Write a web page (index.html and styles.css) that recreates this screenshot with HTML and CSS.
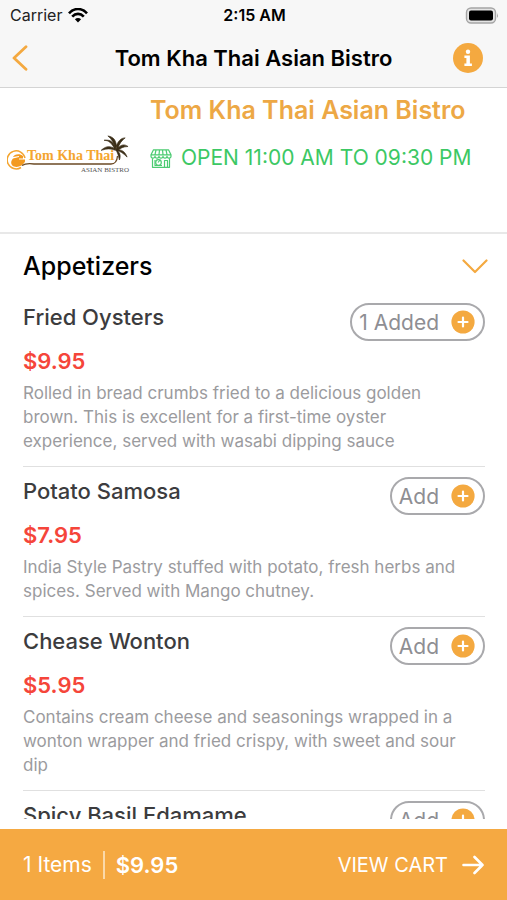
FILE: index.html
```html
<!DOCTYPE html>
<html lang="en">
<head>
<meta charset="utf-8">
<meta name="viewport" content="width=device-width, initial-scale=1">
<title>Tom Kha Thai Asian Bistro</title>
<link rel="stylesheet" href="styles.css">
</head>
<body>
<svg class="sprite" width="0" height="0" aria-hidden="true">
  <symbol id="plus" viewBox="0 0 24 24">
    <circle cx="12" cy="12" r="11.600" fill="#f4a940"/>
    <path d="M12 7.500v9M7.500 12h9" stroke="#fff" stroke-width="2.200" stroke-linecap="round"/>
  </symbol>
</svg>
<div class="app">
  <header class="top">
    <div class="status">
      <span class="carrier">Carrier
        <svg width="20" height="15" viewBox="0 0 20 15" fill="none" stroke="#000" stroke-width="2.6" aria-hidden="true">
          <path d="M1 5.3C6-.4 14-.4 19 5.3M4.2 8.6c3.4-3.7 8.2-3.7 11.6 0"/>
          <path d="M6.9 11.3c1.8-1.8 4.4-1.8 6.2 0L10 14.6z" fill="#000" stroke="none"/>
        </svg>
      </span>
      <span class="clock">2:15 AM</span>
      <svg class="battery" width="34" height="17" viewBox="0 0 34 17" aria-hidden="true">
        <rect x="1.500" y="1" width="29" height="15" rx="4.5" fill="#e4e4e4" stroke="#a5a5a5" stroke-width="1.4"/>
        <rect x="4" y="3.500" width="24" height="10" rx="2"/>
        <path d="M32 6q1.8 2.5 0 5z" fill="#a5a5a5"/>
      </svg>
    </div>
    <nav class="nav">
      <button class="icon-btn" aria-label="Back">
        <svg width="16" height="26" viewBox="0 0 16 26" fill="none" stroke="#f4a940" stroke-width="2.8" stroke-linecap="round" stroke-linejoin="round"><path d="M14 1.8 2 13l12 11.2"/></svg>
      </button>
      <h1>Tom Kha Thai Asian Bistro</h1>
      <button class="icon-btn info" aria-label="Information">
        <svg width="30" height="30" viewBox="0 0 30 30"><circle cx="15" cy="15" r="15" fill="#f4a940"/><circle cx="15" cy="8.7" r="2.2" fill="#fff"/><path d="M11.4 12.6h5.5v7.8h2v2.5h-7.5v-2.5h2v-5.3h-2z" fill="#fff"/></svg>
      </button>
    </nav>
  </header>

  <section class="place">
    <svg class="logo" width="124" height="40" viewBox="0 0 124 40" role="img" aria-label="Tom Kha Thai Asian Bistro logo">
      <path d="M18 23A9 9 0 1 0 14 32.500" fill="none" stroke="#f4a52f" stroke-width="1.500"/>
      <path d="M16 21c-3-3-9-2-10 1l6-1v1l-6 1.500c-3 3-2 7 1 8 4 1.500 9-1 11-5v-2h-6v-1h4z" fill="#f39a1f"/>
      <path d="M15 30.500c3-2 8-2 12-1.500h77c4 0 6-2 6.500-8" fill="none" stroke="#6b4a24" stroke-width="1.300"/>
      <text class="logo-name" x="20" y="25">Tom Kha Thai</text>
      <g fill="#3a2d17" transform="translate(2 0) scale(.96)">
        <path d="M111 14.500c-2-7-5-10-12-9 5 0 8 3 11 9zM112 14c0-7-2-12-9-13 4 3 6 7 8 13zM111 15c-5-4-10-4-15 1 6-2 10-2 15 0zM111 14c2-8 6-11 10-11-4 3-6 6-8 12zM112 15c4-5 8-6 12-3-5 0-8 2-11 4zM112 15c5 0 9 2 11 8-4-4-7-6-11-7zM112 15c3 3 5 6 3 11-1-5-2-8-4-11z" stroke="#3a2d17" stroke-width=".7"/>
      </g>
      <text class="logo-sub" x="74" y="37">ASIAN BISTRO</text>
    </svg>
    <div class="place-info">
      <h2>Tom Kha Thai Asian Bistro</h2>
      <p class="hours">
        <svg width="22" height="19" viewBox="0 0 22 19" fill="none" stroke="#4ccb72" stroke-width="1.200" stroke-linejoin="round" aria-hidden="true">
          <path d="M3.500.8h15l2.500 5H1zM2.500 9v9.300h17V9M1 5.800v1.500c0 2.400 4 2.400 4 0 0 2.400 4 2.400 4 0 0 2.400 4 2.400 4 0 0 2.400 4 2.400 4 0 0 2.400 4 2.400 4 0V5.800M6 1 5 5.600M9.500 1 9 5.600M12.500 1l.5 4.600M16 1l1 4.600M14.500 18v-6.500h3V18"/>
          <circle cx="8.500" cy="13.500" r="2.800"/><path d="m8 13.500 2-2.500M5 11v5.500h7"/>
        </svg>
        OPEN 11:00 AM TO 09:30 PM
      </p>
    </div>
  </section>

  <main class="menu">
    <h2 class="group">
      <button class="group-btn" aria-expanded="true">Appetizers
        <svg width="26" height="15" viewBox="0 0 26 15" fill="none" stroke="#f4a940" stroke-width="2.200" stroke-linecap="round" stroke-linejoin="round" aria-hidden="true"><path d="M1.500 1.500 13 13 24.500 1.500"/></svg>
      </button>
    </h2>
    <article class="item">
      <div class="item-head"><h3>Fried Oysters</h3><button class="add">1 Added <svg width="24" height="24" aria-hidden="true"><use href="#plus"/></svg></button></div>
      <p class="price">$9.95</p>
      <p class="desc">Rolled in bread crumbs fried to a delicious golden brown. This is excellent for a first-time oyster experience, served with wasabi dipping sauce</p>
    </article>
    <article class="item">
      <div class="item-head"><h3>Potato Samosa</h3><button class="add">Add <svg width="24" height="24" aria-hidden="true"><use href="#plus"/></svg></button></div>
      <p class="price">$7.95</p>
      <p class="desc">India Style Pastry stuffed with potato, fresh herbs and spices. Served with Mango chutney.</p>
    </article>
    <article class="item">
      <div class="item-head"><h3>Chease Wonton</h3><button class="add">Add <svg width="24" height="24" aria-hidden="true"><use href="#plus"/></svg></button></div>
      <p class="price">$5.95</p>
      <p class="desc">Contains cream cheese and seasonings wrapped in a wonton wrapper and fried crispy, with sweet and sour dip</p>
    </article>
    <article class="item">
      <div class="item-head"><h3>Spicy Basil Edamame</h3><button class="add">Add <svg width="24" height="24" aria-hidden="true"><use href="#plus"/></svg></button></div>
    </article>
  </main>

  <footer class="cart">
    <p class="summary"><span class="count">1 Items</span><strong>$9.95</strong></p>
    <a class="view" href="#cart">VIEW CART
      <svg width="22" height="20" viewBox="0 0 22 20" fill="none" stroke="#fff" stroke-width="2.600" stroke-linecap="round" stroke-linejoin="round" aria-hidden="true"><path d="M1.500 10h19M12.500 2l8 8-8 8"/></svg>
    </a>
  </footer>
</div>
</body>
</html>
```
FILE: styles.css
```css
* { box-sizing: border-box; }
body, h1, h2, h3, p { margin: 0; }
body {
  font-family: Inter, "Liberation Sans", sans-serif;
  color: #000;
  background: #fff;
}
button {
  font: inherit;
  color: inherit;
  background: none;
  border: 0;
  padding: 0;
}
svg { display: block; flex: none; }
.sprite { position: absolute; }
.app {
  height: 100vh;
  display: flex;
  flex-direction: column;
}
.top {
  flex: none;
  background: #f7f7f7;
  border-bottom: 1px solid #d4d4d4;
}
.status {
  display: grid;
  grid-template-columns: 1fr auto 1fr;
  align-items: center;
  height: 30px;
  padding: 0 8px 0 10px;
  font-size: 16px;
}
.carrier { display: flex; align-items: center; gap: 6px; color: #222; }
.clock { font-weight: 600; }
.battery { justify-self: end; }
.nav {
  display: grid;
  grid-template-columns: 1fr auto 1fr;
  align-items: center;
  height: 57px;
  padding: 0 24px 2px;
}
.nav h1 { font-size: 22px; line-height: 28px; font-weight: 600; }
.icon-btn { justify-self: start; margin-left: -12px; }
.info { justify-self: end; margin-left: 0; }

.place {
  flex: none;
  display: flex;
  gap: 19px;
  height: 146px;
  padding: 7px;
  border-bottom: 2px solid #e8e8e8;
}
.logo { margin-top: 40px; }
.logo-name {
  font: bold 14px "Liberation Serif", serif;
  fill: #f4a52f;
}
.logo-sub {
  font: 7px "Liberation Serif", serif;
  fill: #555;
}
.place-info h2 {
  font-size: 25px;
  line-height: 30px;
  font-weight: 600;
  color: #eda845;
}
.hours {
  display: flex;
  align-items: center;
  gap: 9px;
  margin-top: 19px;
  font-size: 21px;
  line-height: 28px;
  color: #3cc864;
}

.menu {
  flex: 1;
  min-height: 0;
  overflow: hidden;
  margin-bottom: 10px;
  padding: 0 22px 0 23px;
}
.group { font-size: 25px; line-height: 30px; font-weight: 500; }
.group-btn {
  display: flex;
  align-items: center;
  justify-content: space-between;
  width: 100%;
  padding: 17px 0 12px;
}
.group-btn svg { margin-right: -3px; }
.item {
  padding: 10px 0 13px;
  border-bottom: 1px solid #e0e0e0;
}
.item-head {
  display: flex;
  justify-content: space-between;
  align-items: flex-start;
}
.item h3 {
  font-size: 22px;
  line-height: 28px;
  font-weight: 500;
  color: #3c3c3e;
}
.add {
  display: flex;
  align-items: center;
  gap: 12px;
  height: 38px;
  padding: 0 8px 0 7px;
  border: 2px solid #a9a9ac;
  border-radius: 19px;
  font-size: 21px;
  color: #8e8e93;
}
.price {
  margin: 6px 0;
  font-size: 22px;
  line-height: 28px;
  font-weight: 600;
  color: #f5453a;
}
.desc { padding-right: 16px; font-size: 17px; line-height: 24px; color: #9b9b9e; }

.cart {
  flex: none;
  display: flex;
  align-items: center;
  justify-content: space-between;
  height: 71px;
  padding: 0 23px;
  background: #f5a942;
  color: #fff;
}
.summary { display: flex; align-items: center; font-size: 22px; line-height: 28px; }
.summary strong { font-weight: 600; }
.count {
  font-size: 21px;
  padding-right: 11px;
  margin-right: 11px;
  border-right: 2px solid #fbd9a8;
}
.view {
  display: flex;
  align-items: center;
  gap: 14px;
  color: inherit;
  text-decoration: none;
  font-size: 20px;
}
```
